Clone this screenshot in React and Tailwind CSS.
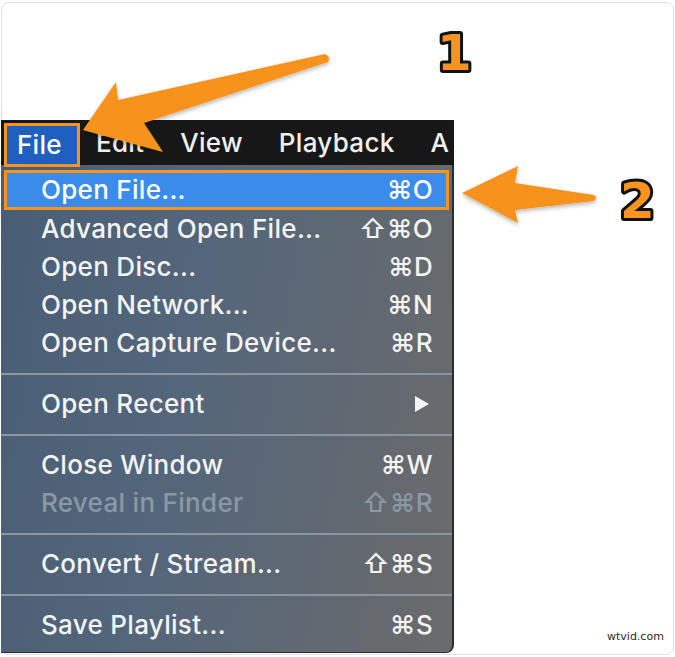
import React from 'react'

const ui = { fontFamily: 'Inter, "Liberation Sans", "DejaVu Sans", sans-serif' }
const keys = { fontFamily: 'Inter, "DejaVu Sans", "Liberation Sans", sans-serif' }

const groups = [
  [
    { label: 'Open File...', key: '⌘O', active: true },
    { label: 'Advanced Open File...', key: '⇧⌘O' },
    { label: 'Open Disc...', key: '⌘D' },
    { label: 'Open Network...', key: '⌘N' },
    { label: 'Open Capture Device...', key: '⌘R' },
  ],
  [{ label: 'Open Recent', submenu: true }],
  [
    { label: 'Close Window', key: '⌘W' },
    { label: 'Reveal in Finder', key: '⇧⌘R', disabled: true },
  ],
  [{ label: 'Convert / Stream...', key: '⇧⌘S' }],
  [{ label: 'Save Playlist...', key: '⌘S' }],
]

const MenuItem = ({ item }) => {
  if (item.active) {
    return (
      <div className="mx-[3px] h-[40px] flex items-center justify-between border-[3px] border-[#f7931e] bg-[#3b8beb] pl-[34px] pr-[13px] text-white">
        <span>{item.label}</span>
        <span style={keys}>{item.key}</span>
      </div>
    )
  }
  return (
    <div
      className={`h-[38px] flex items-center justify-between pl-[40px] pr-[19px] ${
        item.disabled ? 'text-[#8c98a5]' : 'text-[#f4f4f4]'
      }`}
    >
      <span>{item.label}</span>
      {item.submenu ? (
        <svg width="16" height="18" viewBox="0 0 16 18" className="mr-[3px]">
          <path d="M1 1 L15 9 L1 17 Z" fill="#f4f4f4" />
        </svg>
      ) : (
        <span style={keys}>{item.key}</span>
      )}
    </div>
  )
}

const Badge = ({ n, x, y }) => (
  <text
    x={x}
    y={y}
    fontFamily='"DejaVu Sans", "Liberation Sans", sans-serif'
    fontWeight="bold"
    fontSize="50"
    fill="#f7931e"
    stroke="#111"
    strokeWidth="6"
    strokeLinejoin="round"
    paintOrder="stroke"
  >
    {n}
  </text>
)

export default function App() {
  return (
    <div className="w-[675px] h-[657px] bg-white relative overflow-hidden" style={ui}>
      <div className="ml-px mt-[2px] w-[673px] h-[653px] border border-[#e1e1e1] rounded-[8px]">
        <div className="-ml-px mt-[117px] w-[453px] text-[26px] font-medium tracking-[0.3px] leading-none">
          {/* menu bar */}
          <div className="h-[45px] bg-[#171717] flex items-start text-[#f0f0f0]">
            <div className="ml-[3px] mt-[3px] h-[44px] flex items-center border-[3px] border-[#f7931e] bg-[#1e5fbf] pl-[10px] pr-[15px] text-white">
              File
            </div>
            <div className="h-[45px] flex items-center gap-[36px] pl-[16px] whitespace-nowrap">
              <span>Edit</span>
              <span>View</span>
              <span>Playback</span>
              <span>A</span>
            </div>
          </div>

          {/* dropdown */}
          <div className="h-[488px] rounded-br-[8px] border-r-2 border-b border-[#2c2c2c] bg-[linear-gradient(100deg,#485d74_0%,#54667b_40%,#6b6b6b_100%)] pt-[5px]">
            {groups.map((group, gi) => (
              <div key={gi}>
                {gi > 0 && (
                  <div className="pt-[11px] pb-[10px]">
                    <div className="h-[2px] bg-[#8c96a1]" />
                  </div>
                )}
                {group.map((item) => (
                  <MenuItem key={item.label} item={item} />
                ))}
              </div>
            ))}
          </div>
        </div>
      </div>

      {/* callouts */}
      <svg className="absolute left-0 top-0 pointer-events-none" width="675" height="657" viewBox="0 0 675 657">
        <defs>
          <filter id="sh" x="-10%" y="-10%" width="120%" height="130%">
            <feDropShadow dx="0" dy="2" stdDeviation="2" floodColor="#000" floodOpacity="0.3" />
          </filter>
        </defs>
        <path
          d="M83 130 L116 82 L118 100 L325 54 Q331 57 328 62 L144 123 L163 152 Z"
          fill="#f7931e"
          filter="url(#sh)"
        />
        <path
          d="M462 193 L518 166 L515 183 L594 195 Q598 198 594 201 L515 210 L518 223 Z"
          fill="#f7931e"
          filter="url(#sh)"
        />
        <Badge n="1" x="437" y="70" />
        <Badge n="2" x="620" y="218" />
      </svg>

      <div
        className="absolute left-[607px] top-[629px] text-[11px] text-[#2a2a2a]"
        style={{ fontFamily: '"DejaVu Sans", Verdana, sans-serif' }}
      >
        wtvid.com
      </div>
    </div>
  )
}
